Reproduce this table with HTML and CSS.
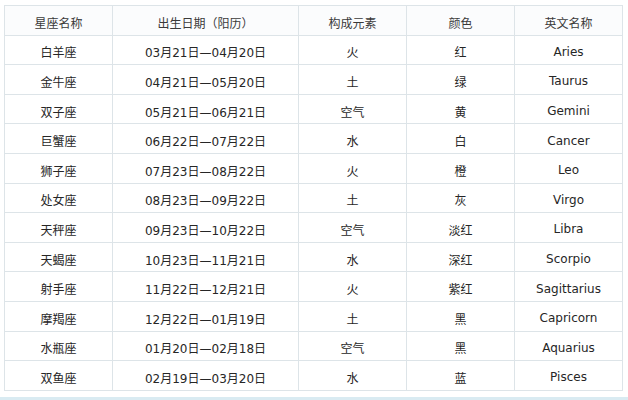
FILE: index.html
```html
<!DOCTYPE html>
<html lang="zh-CN">
<head>
<meta charset="utf-8">
<title>星座表</title>
<link rel="stylesheet" href="styles.css">
</head>
<body>
<div class="page">
<table class="zodiac">
<colgroup>
<col class="c1"><col class="c2"><col class="c3"><col class="c4"><col class="c5">
</colgroup>
<thead>
<tr><th>星座名称</th><th>出生日期（阳历）</th><th>构成元素</th><th>颜色</th><th>英文名称</th></tr>
</thead>
<tbody>
<tr><td>白羊座</td><td>03月21日—04月20日</td><td>火</td><td>红</td><td>Aries</td></tr>
<tr><td>金牛座</td><td>04月21日—05月20日</td><td>土</td><td>绿</td><td>Taurus</td></tr>
<tr><td>双子座</td><td>05月21日—06月21日</td><td>空气</td><td>黄</td><td>Gemini</td></tr>
<tr><td>巨蟹座</td><td>06月22日—07月22日</td><td>水</td><td>白</td><td>Cancer</td></tr>
<tr><td>狮子座</td><td>07月23日—08月22日</td><td>火</td><td>橙</td><td>Leo</td></tr>
<tr><td>处女座</td><td>08月23日—09月22日</td><td>土</td><td>灰</td><td>Virgo</td></tr>
<tr><td>天秤座</td><td>09月23日—10月22日</td><td>空气</td><td>淡红</td><td>Libra</td></tr>
<tr><td>天蝎座</td><td>10月23日—11月21日</td><td>水</td><td>深红</td><td>Scorpio</td></tr>
<tr><td>射手座</td><td>11月22日—12月21日</td><td>火</td><td>紫红</td><td>Sagittarius</td></tr>
<tr><td>摩羯座</td><td>12月22日—01月19日</td><td>土</td><td>黑</td><td>Capricorn</td></tr>
<tr><td>水瓶座</td><td>01月20日—02月18日</td><td>空气</td><td>黑</td><td>Aquarius</td></tr>
<tr><td>双鱼座</td><td>02月19日—03月20日</td><td>水</td><td>蓝</td><td>Pisces</td></tr>
</tbody>
</table>
<div class="bottom-line"></div>
</div>
</body>
</html>
```
FILE: styles.css
```css
html, body {
  margin: 0;
  padding: 0;
  background: #ffffff;
}
.page {
  width: 628px;
  height: 400px;
  padding: 5px 0 0 4px;
  box-sizing: border-box;
  position: relative;
  overflow: hidden;
}
.zodiac {
  border-collapse: collapse;
  table-layout: fixed;
  width: 618px;
  font-family: "DejaVu Sans", "Noto Sans CJK SC", sans-serif;
  font-size: 12px;
  color: #262626;
}
.c1 { width: 108px; }
.c2 { width: 186px; }
.c3 { width: 108px; }
.c4 { width: 108px; }
.c5 { width: 108px; }
.zodiac th,
.zodiac td {
  border: 1px solid #dde4e8;
  height: 29.6px;
  padding: 4px 0 0;
  box-sizing: border-box;
  text-align: center;
  vertical-align: middle;
  font-weight: normal;
  white-space: nowrap;
}
.zodiac th {
  background: #fbfcfd;
  color: #3a3a3a;
}
.bottom-line {
  position: absolute;
  left: 0;
  right: 0;
  bottom: 0;
  height: 3px;
  background: #d9ebf2;
}
```
